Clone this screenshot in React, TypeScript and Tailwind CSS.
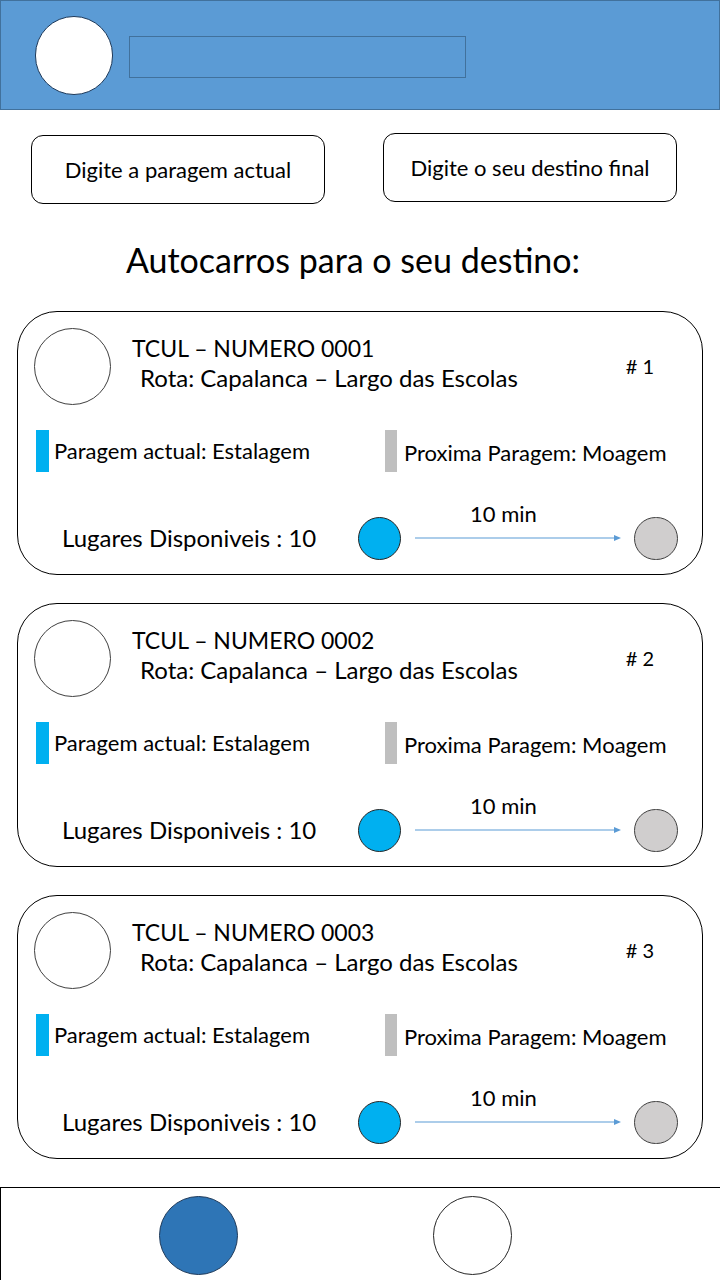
const buses = [
  { numero: "0001", pos: 1 },
  { numero: "0002", pos: 2 },
  { numero: "0003", pos: 3 },
]

function BusCard({ numero, pos }: { numero: string; pos: number }) {
  return (
    <div className="mx-[17px] h-[264px] rounded-[40px] border border-black bg-white px-[16px] pt-[16px] text-black">
      {/* top row */}
      <div className="flex h-[78px] items-start">
        <div className="h-[77px] w-[77px] shrink-0 rounded-full border border-[#404040]" />
        <div className="ml-[21px] mt-[6px] flex flex-col">
          <div className="text-[23px] leading-[28px]">TCUL – NUMERO {numero}</div>
          <div className="ml-[8px] mt-[2px] text-[24px] leading-[28px]">Rota: Capalanca – Largo das Escolas</div>
        </div>
        <div className="ml-auto mr-[32px] mt-[26px] text-[20px] leading-[24px]"># {pos}</div>
      </div>

      {/* stops */}
      <div className="mt-[23px] flex h-[43px]">
        <div className="flex w-[351px] items-center">
          <div className="ml-[2px] h-[42px] w-[13px] bg-[#00b0f0]" />
          <span className="ml-[5px] text-[22px] leading-[26px]">Paragem actual: Estalagem</span>
        </div>
        <div className="flex items-center">
          <div className="h-[42px] w-[12px] bg-[#bfbfbf]" />
          <span className="ml-[7px] mt-[4px] text-[22px] leading-[26px]">Proxima Paragem: Moagem</span>
        </div>
      </div>

      {/* bottom row */}
      <div className="mt-[44px] flex h-[44px] items-center">
        <span className="ml-[28px] w-[296px] text-[24px] leading-[28px]">Lugares Disponiveis : 10</span>
        <div className="h-[43px] w-[43px] shrink-0 rounded-full border border-[#262626] bg-[#00b0f0]" />
        <div className="relative ml-[14px] flex h-[44px] w-[207px] items-center">
          <span className="absolute left-[55px] top-[-15px] text-[22px] leading-[26px]">10 min</span>
          <svg width="207" height="10" viewBox="0 0 207 10">
            <line x1="0" y1="5" x2="200" y2="5" stroke="#5b9bd5" strokeWidth="1.2" />
            <polygon points="199,2 206,5 199,8" fill="#5b9bd5" />
          </svg>
        </div>
        <div className="ml-[12px] h-[43px] w-[44px] shrink-0 rounded-full border border-[#404040] bg-[#d0cece]" />
      </div>
    </div>
  )
}

export default function App() {
  return (
    <div className="flex min-h-[1280px] w-[720px] flex-col bg-white font-['Lato','Liberation_Sans',sans-serif] text-black">
      {/* Header */}
      <header className="flex h-[110px] items-start border border-[#41719c] bg-[#5b9bd5] pl-[34px] pt-[15px]">
        <div className="h-[79px] w-[78px] rounded-full border border-[#1f3a5a] bg-white" />
        <div className="ml-[16px] mt-[20px] h-[42px] w-[337px] border border-[#41719c]" />
      </header>

      {/* Inputs */}
      <div className="mt-[23px] flex items-start px-[31px]">
        <button className="mt-[2px] flex h-[69px] w-[294px] items-center justify-center rounded-[12px] border border-black text-[22px]">
          Digite a paragem actual
        </button>
        <button className="ml-[58px] flex h-[69px] w-[294px] items-center justify-center rounded-[12px] border border-black text-[22px]">
          Digite o seu destino final
        </button>
      </div>

      <h1 className="mt-[36px] pr-[14px] text-center text-[34px] leading-[40px]">Autocarros para o seu destino:</h1>

      {/* Bus list */}
      <div className="mt-[31px] flex flex-col gap-[28px]">
        {buses.map((b) => (
          <BusCard key={b.numero} numero={b.numero} pos={b.pos} />
        ))}
      </div>

      {/* Bottom nav */}
      <nav className="mt-[28px] flex h-[93px] items-start border-l border-t border-black pt-[8px]">
        <div className="ml-[158px] h-[79px] w-[79px] rounded-full border border-[#1f3a5a] bg-[#2e75b6]" />
        <div className="ml-[195px] h-[79px] w-[79px] rounded-full border border-[#262626] bg-white" />
      </nav>
    </div>
  )
}
